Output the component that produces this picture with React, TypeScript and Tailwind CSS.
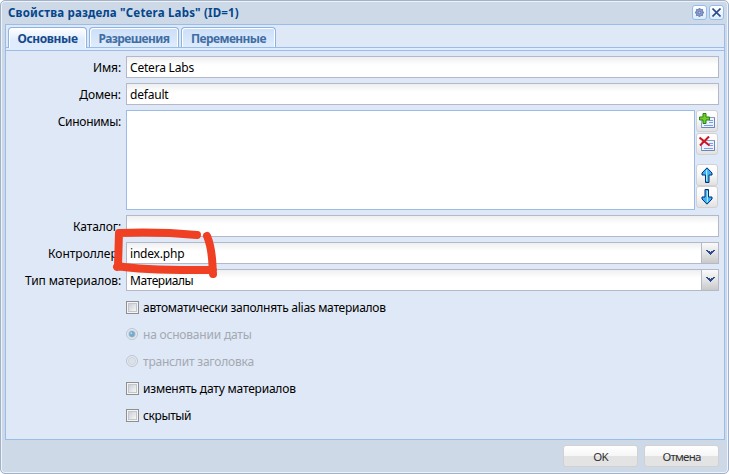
import React from "react";

function Row({ label, children, tall = false, spacing = "tracking-[-0.1px]" }: { label?: string; children: React.ReactNode; tall?: boolean; spacing?: string }) {
  return (
    <div className={"flex " + (tall ? "h-[100px]" : "h-[22px]")}>
      <div className={"w-[115px] shrink-0 whitespace-nowrap text-right leading-[23px] " + spacing}>{label}</div>
      <div className="ml-[5px] flex min-w-0 flex-1">{children}</div>
    </div>
  );
}

function Field({ value, spacing = "tracking-[-0.2px]" }: { value?: string; spacing?: string }) {
  return (
    <div className={"h-[22px] flex-1 border border-[#b5b8c8] bg-white bg-linear-to-b from-[#eeeff0] from-0% to-white to-40% pl-[3px] leading-[21px] " + spacing}>
      {value}
    </div>
  );
}

function Combo({ value, spacing }: { value: string; spacing?: string }) {
  return (
    <>
      <Field value={value} spacing={spacing} />
      <div className="flex h-[22px] w-[17px] items-center justify-center border border-l-0 border-[#b5b8c8] bg-linear-to-b from-[#fafafa] via-[#e4e4e6] to-[#c9c9ca]">
        <svg width="9" height="6" viewBox="0 0 9 6" className="-mt-px" shapeRendering="crispEdges">
          <path d="M0 0h2v1h2v1h1V1h2V0h2v1H8v1H7v1H6v1H5v1H4V4H3V3H2V2H1V1H0z" fill="#2b4d8b" />
        </svg>
      </div>
    </>
  );
}

function Check({ label, radio, on, spacing = "tracking-[-0.2px]" }: { label: string; radio?: boolean; on?: boolean; spacing?: string }) {
  return (
    <Row>
      <div className={"flex items-center " + (radio ? "text-[#a3a8b2]" : "")}>
        {radio ? (
          <svg width="13" height="13" viewBox="0 0 13 13">
            <circle cx="6" cy="6" r="5.5" fill="#e6eaf0" stroke="#bcc4cf" />
            <circle cx="6" cy="6" r="3.6" fill={on ? "#c3dcec" : "#dce2eb"} stroke="#c9d0db" strokeWidth=".8" />
            {on && <circle cx="6" cy="6" r="2.9" fill="#76a9ca" />}
            {on && <circle cx="5.3" cy="5.2" r="1" fill="#b5dbee" />}
          </svg>
        ) : (
          <div className="h-[13px] w-[13px] border border-[#8e8f8f] bg-[#f4f4f4] p-px">
            <div className="h-full w-full border border-[#c3c6cc] bg-linear-to-br from-[#cbcfd5] to-[#f6f6f6]" />
          </div>
        )}
        <span className={"ml-1 whitespace-nowrap pt-px leading-[23px] " + spacing}>{label}</span>
      </div>
    </Row>
  );
}

function Tool({ children }: { children: React.ReactNode }) {
  return (
    <div className="flex h-[22px] w-[22px] items-center justify-center rounded-[3px] border border-[#d1d1d1] bg-linear-to-b from-white from-0% via-[#f7f7f7] via-50% to-[#e1e1e1]">
      {children}
    </div>
  );
}

function Card() {
  return (
    <>
      <path d="M3.5 4.5h12v10h-13v-5z" fill="#eaf3ff" stroke="#8b9dbd" />
      <path d="M2.5 14.5h13v-10" stroke="#6d86b3" fill="none" />
      <path d="M10 7.5h4M10 9.5h4M5 12.5h9" stroke="#7d9ee0" />
    </>
  );
}

function Arrow({ down }: { down?: boolean }) {
  return (
    <svg width="16" height="16" viewBox="0 0 16 16" className={down ? "rotate-180" : ""}>
      <path d="M8 .8L13 6v2h-3v7.5H6.5V8H3V6z" fill="#37b6f4" stroke="#0b2a78" />
      <path d="M7.6 3v11" stroke="#a8eaff" strokeWidth="1.2" />
    </svg>
  );
}

function Button({ children, spacing }: { children: string; spacing: string }) {
  return (
    <div className={"h-[22px] w-[75px] rounded-[3px] border border-[#d1d1d1] bg-linear-to-b from-white from-0% via-[#f6f6f6] via-48% to-[#e3e3e3] to-52% text-center text-[11.5px] leading-[22px] text-[#333] " + spacing}>
      {children}
    </div>
  );
}

function Tab({ children, active, size }: { children: string; active?: boolean; size: string }) {
  return (
    <div
      className={
        "rounded-t-[4px] border border-b-0 border-[#8db3e3] text-center font-bold leading-[21px] shadow-[inset_1px_1px_0_#fff,inset_-1px_0_0_#fff] " +
        size +
        (active
          ? " h-[21px] bg-linear-to-b from-white to-[#deecfd] to-60% text-[#15498b]"
          : " h-[20px] bg-linear-to-b from-[#ccdff8] to-[#deecfd] text-[#416da3]")
      }
    >
      {children}
    </div>
  );
}

export default function App() {
  return (
    <div className="relative flex h-[474px] w-[729px] flex-col overflow-hidden rounded-[5px] border border-[#a2b1c5] bg-[#ced9e7] px-1 font-['Noto_Sans','Liberation_Sans',sans-serif] text-[12px] text-black shadow-[inset_0_0_0_1px_#edf3fa]">
      <header className="flex h-[23px] shrink-0 items-center pl-[3px]">
        <h1 className="flex-1 whitespace-nowrap text-[11.5px] font-bold tracking-[0.19px] text-[#04468c]">Свойства раздела "Cetera Labs" (ID=1)</h1>
        <div className="flex gap-[2px]">
          <div className="flex h-[15px] w-[15px] items-center justify-center rounded-[3px] border border-[#94bdeb] bg-linear-to-b from-white to-[#dcebfc]">
            <svg width="11" height="11" viewBox="0 0 11 11">
              <circle cx="5.5" cy="5.5" r="3.6" fill="#8c9dcb" stroke="#7788b8" />
              <path d="M5.5 1v1.5M5.5 8.5v1.5M1 5.5h1.5M8.5 5.5h1.5M2.3 2.3l1 1M7.7 7.7l1 1M8.7 2.3l-1 1M3.3 7.7l-1 1" stroke="#7182b3" strokeWidth="1.4" />
              <circle cx="5.5" cy="5.5" r="1.3" fill="#b9c8e6" stroke="#5b6ca3" strokeWidth=".8" />
            </svg>
          </div>
          <div className="flex h-[15px] w-[15px] items-center justify-center rounded-[3px] border border-[#94bdeb] bg-linear-to-b from-white to-[#dcebfc]">
            <svg width="9" height="9" viewBox="0 0 9 9"><path d="M.5.5l8 8M8.5.5l-8 8" stroke="#2f4b86" strokeWidth="1.6" /></svg>
          </div>
        </div>
      </header>
      <main className="h-[416px] w-[720px] shrink-0 border border-[#99bce8] bg-[#dfe8f6]">
        <div className="flex h-[23px] gap-[2px] border-b border-[#99bce8] pl-[2px] pt-[2px]">
          <Tab active size="w-[79px] tracking-[-0.4px]">Основные</Tab>
          <Tab size="w-[90px] tracking-[-0.6px]">Разрешения</Tab>
          <Tab size="w-[95px] tracking-[-0.6px]">Переменные</Tab>
        </div>
        <div className="h-[3px] border-b border-[#99bce8] bg-[#deecfd]" />
        <div className="flex flex-col gap-[5px] pr-[5px] pt-[5px]">
          <Row label="Имя:"><Field value="Cetera Labs" /></Row>
          <Row label="Домен:"><Field value="default" /></Row>
          <Row label="Синонимы:" spacing="tracking-[-0.3px]" tall>
            <div className="h-[100px] w-[569px] border border-[#99bce8] bg-white" />
            <div className="ml-px flex flex-col">
              <Tool>
                <svg width="16" height="16" viewBox="0 0 16 16">
                  <Card />
                  <path d="M4 .5h3V4h3.5v3H7v3.5H4V7H.5V4H4z" fill="#72cc29" stroke="#268314" />
                </svg>
              </Tool>
              <div className="mt-px">
                <Tool>
                  <svg width="16" height="16" viewBox="0 0 16 16">
                    <Card />
                    <path d="M.5 1.5l10 8M10 .5L1 9.5" stroke="#cd1720" strokeWidth="2" />
                  </svg>
                </Tool>
              </div>
              <div className="mt-[9px]"><Tool><Arrow /></Tool></div>
              <Tool><Arrow down /></Tool>
            </div>
          </Row>
          <Row label="Каталог:"><Field /></Row>
          <Row label="Контроллер:" spacing="tracking-[0px]"><Combo value="index.php" /></Row>
          <Row label="Тип материалов:"><Combo value="Материалы" spacing="tracking-[-0.42px]" /></Row>
          <Check label="автоматически заполнять alias материалов" spacing="tracking-[-0.27px]" />
          <Check label="на основании даты" radio on />
          <Check label="транслит заголовка" radio />
          <Check label="изменять дату материалов" />
          <Check label="скрытый" spacing="tracking-[-0.38px]" />
        </div>
      </main>
      <footer className="flex justify-end gap-[6px] pr-[5px] pt-[5px]">
        <Button spacing="tracking-[-0.8px]">OK</Button>
        <Button spacing="tracking-[-0.75px]">Отмена</Button>
      </footer>
      <svg className="absolute left-[109px] top-[224px]" width="115" height="62" viewBox="110 225 115 62" fill="none" stroke="#f04023" strokeWidth="8" strokeLinecap="round" strokeLinejoin="round">
        <path d="M197 235C175 233 145 232 119 233L118 266C145 271 185 270 213 270M207 236C213 250 212 262 213 274M117 267l3-1" />
      </svg>
    </div>
  );
}
